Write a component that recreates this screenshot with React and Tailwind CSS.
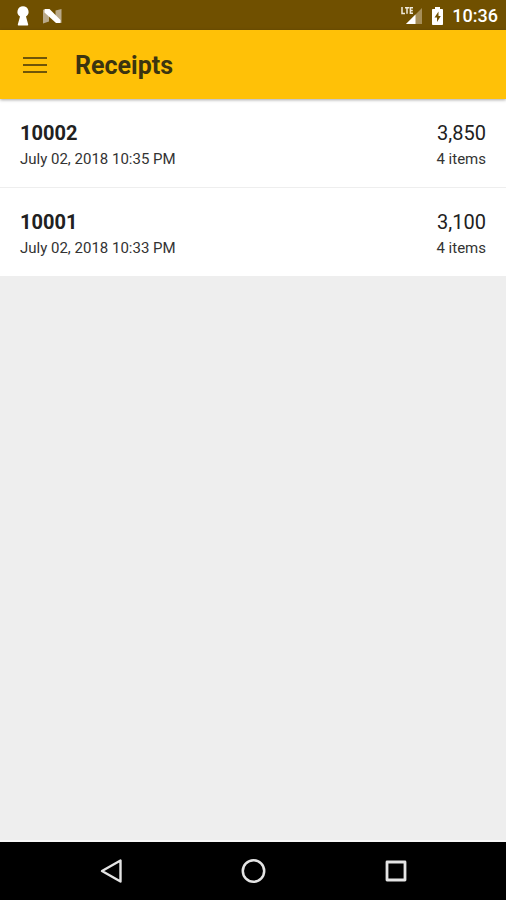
const receipts = [
  { id: "10002", date: "July 02, 2018 10:35 PM", total: "3,850", items: "4 items" },
  { id: "10001", date: "July 02, 2018 10:33 PM", total: "3,100", items: "4 items" },
];

function StatusBar() {
  return (
    <div className="flex h-[30px] items-center bg-[#705000] pt-0.5 pr-2 pl-4 text-white">
      <svg width="14" height="20" viewBox="0 0 14 20" fill="currentColor" aria-hidden="true">
        <path d="M7 0.300a5.600 5.600 0 0 1 3 10.300L12.200 18.500q.2.900-.7.900H2.500q-.9 0-.7-.9L4 10.600A5.600 5.600 0 0 1 7 .3z" />
      </svg>
      <svg className="ml-3" width="20" height="16" viewBox="0 0 20 16" aria-hidden="true">
        <path d="M1 1.500L7 4v9.500L1 15.500zM13.500 2.500l6-1.500v14l-6-2z" fill="#b9a98a" />
        <path d="M2.500 1H7.500L18.500 12V15h-4.500L2.500 4.500z" fill="#fff" />
      </svg>
      <span className="flex-1" />
      <svg width="23" height="20" viewBox="0 0 23 20" aria-hidden="true">
        <path d="M22 2v16H6z" fill="#a68e58" />
        <path d="M15.500 8.500V18H6z" fill="#fff" />
        <path d="M2 1v6.500h3M5 1.700h4.200M7 1.700v6M13 1.700h-2.600v5.500H13M10.500 4.500h2.300" fill="none" stroke="#f0eadc" strokeWidth="1.500" />
      </svg>
      <svg className="ml-2" width="13" height="20" viewBox="0 0 13 20" aria-hidden="true">
        <path d="M4 1h5v2h2.200q.8 0 .8.8v14.400q0 .8-.8.8H1.800q-.8 0-.8-.8V3.800q0-.8.8-.8H4z" fill="#fff" />
        <path d="M7.500 5.500L3.500 11.500h2.500v4.500l3.800-6H7.500z" fill="#705000" />
      </svg>
      <span className="ml-2 text-[18px] leading-5 font-medium">10:36</span>
    </div>
  );
}

function AppBar() {
  return (
    <header className="relative flex h-[69px] items-center bg-[#ffc107] px-[23px] shadow-[0_1px_3px_rgba(0,0,0,0.35)]">
      <button type="button" aria-label="Open menu" className="text-[#705608]">
        <svg width="24" height="18" viewBox="0 0 24 18" fill="currentColor" aria-hidden="true">
          <path d="M0 1h24v2H0zM0 8h24v2H0zM0 15h24v2H0z" />
        </svg>
      </button>
      <h1 className="ml-7 pt-0.5 text-[25px] leading-8 font-bold text-[#3b3410]">Receipts</h1>
    </header>
  );
}

function ReceiptRow({ receipt }) {
  return (
    <li className="flex h-[89px] items-center justify-between border-b border-[#eeeeee] bg-white px-5 pt-[3px] text-[#212121]">
      <div>
        <div className="text-[20px] leading-7 font-bold">{receipt.id}</div>
        <div className="text-[15px] leading-6 text-[#333333]">{receipt.date}</div>
      </div>
      <div className="text-right">
        <div className="text-[20px] leading-7">{receipt.total}</div>
        <div className="text-[15px] leading-6 text-[#333333]">{receipt.items}</div>
      </div>
    </li>
  );
}

function NavBar() {
  return (
    <nav className="flex h-[58px] justify-center bg-black text-[#e4e4e4]">
      <button type="button" aria-label="Back" className="flex w-[28%] items-center justify-center">
        <svg width="24" height="26" viewBox="0 0 24 26" fill="none" stroke="currentColor" strokeWidth="2.400" strokeLinejoin="round" aria-hidden="true">
          <path d="M21.500 2.500v21L3 13z" />
        </svg>
      </button>
      <button type="button" aria-label="Home" className="flex w-[28%] items-center justify-center">
        <svg width="26" height="26" viewBox="0 0 26 26" fill="none" stroke="currentColor" strokeWidth="2.500" aria-hidden="true">
          <circle cx="13.500" cy="13" r="10.700" />
        </svg>
      </button>
      <button type="button" aria-label="Recent apps" className="flex w-[28%] items-center justify-center">
        <svg width="24" height="22" viewBox="0 0 24 22" fill="none" stroke="currentColor" strokeWidth="2.800" strokeLinejoin="round" aria-hidden="true">
          <path d="M4 2h18v18H4z" />
        </svg>
      </button>
    </nav>
  );
}

export default function App() {
  return (
    <div className="flex min-h-screen flex-col bg-[#eeeeee] font-[Roboto,sans-serif]">
      <StatusBar />
      <AppBar />
      <main className="flex-1 border-b-2 border-[#f8f8f8]">
        <ul>
          {receipts.map((receipt) => (
            <ReceiptRow key={receipt.id} receipt={receipt} />
          ))}
        </ul>
      </main>
      <NavBar />
    </div>
  );
}
